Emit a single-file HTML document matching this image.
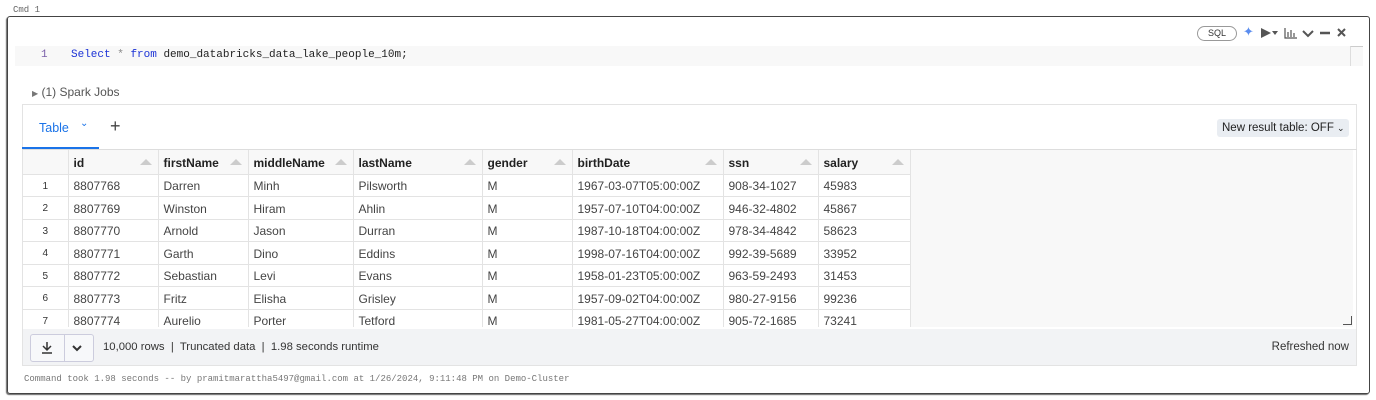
<!DOCTYPE html>
<html><head><meta charset="utf-8"><style>
*{box-sizing:border-box;margin:0;padding:0}
body{width:1376px;height:400px;background:#fff;position:relative;overflow:hidden;font-family:"Liberation Sans",sans-serif;font-size:12px;color:#333}
.a{position:absolute}
.mono{font-family:"Liberation Mono",monospace}
table{border-collapse:collapse;table-layout:fixed}
td,th{height:22.5px;border-right:1px solid #e3e3e3;border-bottom:1px solid #e3e3e3;padding-left:5px;text-align:left;white-space:nowrap;overflow:hidden;font-size:12px}
th{font-weight:bold;color:#222;background:#f8f8f8;position:relative;height:24px;padding-top:2px}
th .s{position:absolute;right:6px;top:9px;width:0;height:0;border-left:6px solid transparent;border-right:6px solid transparent;border-bottom:6px solid #ccc}
td{color:#444;background:#fff;padding-top:2px}
td.n{text-align:center;font-size:10px;color:#333;padding:2px 0 0}
</style></head><body>
<div class="a mono" style="left:13px;top:5px;font-size:9px;color:#666">Cmd 1</div>
<div class="a" style="left:7px;top:16px;width:1363px;height:378px;border:1px solid #444;border-radius:3px;box-shadow:-1px 1px 1px #666"></div>
<div class="a" style="left:1197px;top:26px;width:40px;height:15px;border:1px solid #999;border-radius:8px;font-size:9px;text-align:center;line-height:13px;color:#333">SQL</div>
<div class="a" style="left:1243px;top:24px;color:#5b8def;font-size:13px">✦</div>
<svg class="a" style="left:1260px;top:27px" width="120" height="12">
<polygon points="1,1 11,6 1,11" fill="#555"/><polygon points="12,4 18,4 15,8" fill="#555"/>
<path d="M25 1V11H37M28 10V5M31 10V3M34 10V6" stroke="#555" fill="none" stroke-width="1.2"/>
<path d="M43 4L48 9L53 4" stroke="#555" fill="none" stroke-width="2"/>
<path d="M60 6H70" stroke="#555" stroke-width="2.5"/>
<path d="M78 2L85 9M85 2L78 9" stroke="#555" stroke-width="2"/>
</svg>
<div class="a" style="left:15px;top:46px;width:1348px;height:20px;background:#f8f8f8"></div>
<div class="a" style="left:1350px;top:46px;width:13px;height:20px;border-left:1px solid #ddd;border-top:1px solid #ccc"></div>
<div class="a mono" style="left:41px;top:49px;color:#7a5ea8;font-size:11px">1</div>
<div class="a mono" style="left:71px;top:49px;color:#222;font-size:11px"><span style="color:#1c33d6">Select</span> <span style="color:#888">*</span> <span style="color:#1c33d6">from</span> demo_databricks_data_lake_people_10m;</div>
<div class="a" style="left:32px;top:85px;color:#555;font-size:12px"><span style="font-size:8px;color:#777">▶</span> (1) Spark Jobs</div>
<div class="a" style="left:22px;top:104px;width:1335px;height:262px;border:1px solid #e3e3e3;background:#fff"></div>
<div class="a" style="left:39px;top:121px;color:#1a73e8;font-size:12.5px">Table</div>
<div class="a" style="left:80px;top:118px;color:#1a73e8;font-size:10px">⌄</div>
<div class="a" style="left:110px;top:116px;color:#444;font-size:18px">+</div>
<div class="a" style="left:22px;top:147px;width:77px;height:3px;background:#1a73e8"></div>
<div class="a" style="left:1217px;top:119px;width:132px;height:18px;background:#e9edf2;border-radius:3px;font-size:11.5px;line-height:18px;padding-left:5px;color:#222;white-space:nowrap">New result table: OFF <span style="font-size:9px">⌄</span></div>
<div class="a" style="left:22px;top:149px;width:1335px;height:1px;background:#ddd"></div>
<div class="a" style="left:23px;top:150px;width:1330px;height:177px;background:#f8f8f8;overflow:hidden">
<table style="width:887px">
<colgroup><col style="width:45px"><col style="width:90px"><col style="width:90px"><col style="width:105px"><col style="width:129px"><col style="width:90px"><col style="width:151px"><col style="width:95px"><col style="width:92px"></colgroup>
<tr><th></th><th>id<i class="s"></i></th><th>firstName<i class="s"></i></th><th>middleName<i class="s"></i></th><th>lastName<i class="s"></i></th><th>gender<i class="s"></i></th><th>birthDate<i class="s"></i></th><th>ssn<i class="s"></i></th><th>salary<i class="s"></i></th></tr>
<tr><td class="n">1</td><td>8807768</td><td>Darren</td><td>Minh</td><td>Pilsworth</td><td>M</td><td>1967-03-07T05:00:00Z</td><td>908-34-1027</td><td>45983</td></tr>
<tr><td class="n">2</td><td>8807769</td><td>Winston</td><td>Hiram</td><td>Ahlin</td><td>M</td><td>1957-07-10T04:00:00Z</td><td>946-32-4802</td><td>45867</td></tr>
<tr><td class="n">3</td><td>8807770</td><td>Arnold</td><td>Jason</td><td>Durran</td><td>M</td><td>1987-10-18T04:00:00Z</td><td>978-34-4842</td><td>58623</td></tr>
<tr><td class="n">4</td><td>8807771</td><td>Garth</td><td>Dino</td><td>Eddins</td><td>M</td><td>1998-07-16T04:00:00Z</td><td>992-39-5689</td><td>33952</td></tr>
<tr><td class="n">5</td><td>8807772</td><td>Sebastian</td><td>Levi</td><td>Evans</td><td>M</td><td>1958-01-23T05:00:00Z</td><td>963-59-2493</td><td>31453</td></tr>
<tr><td class="n">6</td><td>8807773</td><td>Fritz</td><td>Elisha</td><td>Grisley</td><td>M</td><td>1957-09-02T04:00:00Z</td><td>980-27-9156</td><td>99236</td></tr>
<tr><td class="n">7</td><td>8807774</td><td>Aurelio</td><td>Porter</td><td>Tetford</td><td>M</td><td>1981-05-27T04:00:00Z</td><td>905-72-1685</td><td>73241</td></tr>
</table></div>
<div class="a" style="left:1343px;top:316px;width:9px;height:9px;border-right:1px solid #555;border-bottom:1px solid #555"></div>
<div class="a" style="left:23px;top:329px;width:1333px;height:36px;background:#f2f3f5"></div>
<div class="a" style="left:30px;top:334px;width:64px;height:28px;border:1px solid #ccd;border-radius:3px;background:#f7f8fa"></div>
<div class="a" style="left:64px;top:334px;width:1px;height:28px;background:#ccd"></div>
<svg class="a" style="left:40px;top:341px" width="50" height="14"><path d="M7 1V9M3 5L7 9L11 5M2 12H12" stroke="#333" stroke-width="1.5" fill="none"/><path d="M33 5L37 9L41 5" stroke="#333" stroke-width="2" fill="none"/></svg>
<div class="a" style="left:103px;top:341px;color:#333;font-size:11.3px">10,000 rows &nbsp;|&nbsp; Truncated data &nbsp;|&nbsp; 1.98 seconds runtime</div>
<div class="a" style="right:27px;top:341px;color:#333;font-size:11.5px">Refreshed now</div>
<div class="a mono" style="left:24px;top:374px;font-size:9px;color:#777">Command took 1.98 seconds -- by pramitmarattha5497@gmail.com at 1/26/2024, 9:11:48 PM on Demo-Cluster</div>
</body></html>
